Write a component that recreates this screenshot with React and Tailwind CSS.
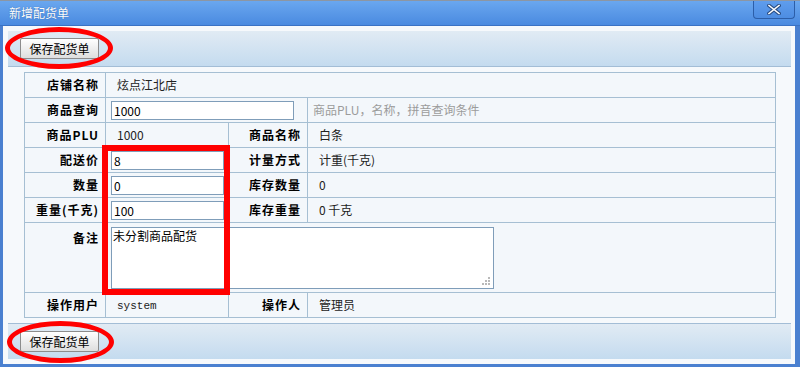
import React from "react";

const font = "font-['Noto_Sans_CJK_SC',sans-serif]";

const Label = ({ children, className = "" }) => (
  <td
    className={`border border-[#a6bfd3] pr-[6px] text-right align-middle text-[12px] font-bold tracking-[1px] text-black ${className}`}
  >
    {children}
  </td>
);

const Value = ({ children, colSpan, className = "", color = "text-[#222]" }) => (
  <td
    colSpan={colSpan}
    className={`border border-[#a6bfd3] pl-[5px] align-middle text-[12px] ${color} ${className}`}
  >
    {children}
  </td>
);

const Text = ({ children }) => <span className="ml-[6px]">{children}</span>;

const Input = ({ value, w }) => (
  <input
    readOnly
    value={value}
    className={`${w} block h-[19px] border border-[#7f9db9] bg-white px-[2px] text-[12px] text-black outline-none`}
  />
);

const SaveButton = () => (
  <button className="h-[21px] w-[79px] rounded-[2px] border border-[#8c8c8c] bg-gradient-to-b from-white to-[#dedede] text-[12px] text-black">
    保存配货单
  </button>
);

const Toolbar = ({ border }) => (
  <div
    className={`flex h-[36px] items-center bg-gradient-to-b from-[#e1ebf4] to-[#c4dbef] pl-[12px] ${border}`}
  >
    <SaveButton />
  </div>
);

export default function App() {
  return (
    <div className={`relative flex h-[367px] w-[800px] flex-col overflow-hidden ${font}`}>
      {/* title bar */}
      <div className="relative flex h-[26px] shrink-0 items-center border-t border-b border-t-[#8c96a3] border-b-[#3a72c4] bg-gradient-to-b from-[#6aa7ef] to-[#4a8ae0] pl-[9px]">
        <span className="text-[12px] text-white [text-shadow:0_0_1px_#2a5a9a]">新增配货单</span>
        <div className="absolute right-[5px] top-0 flex h-[18px] w-[42px] items-center justify-center rounded-b-[4px] border border-t-0 border-[#2c5ea8] bg-gradient-to-b from-[#5f9ded] to-[#4d8de2]">
          <svg width="14" height="11" viewBox="0 0 14 11">
            <path d="M2 1.5 L12 9.5 M12 1.5 L2 9.5" stroke="#2b4f86" strokeWidth="3.6" strokeLinecap="square" />
            <path d="M2 1.5 L12 9.5 M12 1.5 L2 9.5" stroke="#ffffff" strokeWidth="1.6" strokeLinecap="square" />
          </svg>
        </div>
      </div>

      {/* body */}
      <div className="flex flex-1 flex-col border-b-[3px] border-l-[3px] border-r-[5px] border-[#4a80d0] bg-[#f6f9fc] pl-[5px] pr-[4px] pt-[5px]">
        <Toolbar border="border-b border-[#a3bdd6]" />

        <table className="ml-[16px] mt-[5px] w-[752px] table-fixed border-collapse bg-[#f3f7fb]">
          <colgroup>
            <col className="w-[81px]" />
            <col className="w-[123px]" />
            <col className="w-[79px]" />
            <col />
          </colgroup>
          <tbody>
            <tr className="h-[25px]">
              <Label>店铺名称</Label>
              <Value colSpan={3}>
                <Text>炫点江北店</Text>
              </Value>
            </tr>
            <tr className="h-[25px]">
              <Label>商品查询</Label>
              <Value colSpan={2}>
                <Input value="1000" w="w-[183px]" />
              </Value>
              <Value color="text-[#9c9c9c]">商品PLU，名称，拼音查询条件</Value>
            </tr>
            <tr className="h-[25px]">
              <Label>商品PLU</Label>
              <Value>
                <Text>1000</Text>
              </Value>
              <Label>商品名称</Label>
              <Value>
                <Text>白条</Text>
              </Value>
            </tr>
            <tr className="h-[25px]">
              <Label>配送价</Label>
              <Value>
                <Input value="8" w="w-[113px]" />
              </Value>
              <Label>计量方式</Label>
              <Value>
                <Text>计重(千克)</Text>
              </Value>
            </tr>
            <tr className="h-[25px]">
              <Label>数量</Label>
              <Value>
                <Input value="0" w="w-[113px]" />
              </Value>
              <Label>库存数量</Label>
              <Value>
                <Text>0</Text>
              </Value>
            </tr>
            <tr className="h-[25px]">
              <Label>重量(千克)</Label>
              <Value>
                <Input value="100" w="w-[113px]" />
              </Value>
              <Label>库存重量</Label>
              <Value>
                <Text>0 千克</Text>
              </Value>
            </tr>
            <tr className="h-[70px]">
              <Label className="pt-[6px] align-top">备注</Label>
              <Value colSpan={3} className="align-top pt-[4px]">
                <div className="relative h-[62px] w-[383px]">
                  <textarea
                    readOnly
                    value="未分割商品配货"
                    className="block h-full w-full resize-none border border-[#7f9db9] bg-white px-[1px] py-0 text-[12px] leading-[16px] text-black outline-none"
                  />
                  <svg className="absolute bottom-[3px] right-[3px]" width="9" height="9" viewBox="0 0 9 9">
                    <rect x="6" y="0" width="2" height="2" fill="#b9b9b9" />
                    <rect x="3" y="3" width="2" height="2" fill="#b9b9b9" />
                    <rect x="6" y="3" width="2" height="2" fill="#b9b9b9" />
                    <rect x="0" y="6" width="2" height="2" fill="#b9b9b9" />
                    <rect x="3" y="6" width="2" height="2" fill="#b9b9b9" />
                    <rect x="6" y="6" width="2" height="2" fill="#b9b9b9" />
                  </svg>
                </div>
              </Value>
            </tr>
            <tr className="h-[25px]">
              <Label>操作用户</Label>
              <Value>
                <span className="ml-[6px] font-['Liberation_Mono',monospace] text-[11px]">system</span>
              </Value>
              <Label>操作人</Label>
              <Value>
                <Text>管理员</Text>
              </Value>
            </tr>
          </tbody>
        </table>

        <div className="mt-[5px]">
          <Toolbar border="border-t border-[#a3bdd6]" />
        </div>
      </div>

      {/* red annotations */}
      <div className="pointer-events-none absolute left-[5px] top-[27px] h-[42px] w-[108px] rounded-[50%] border-[5px] border-[#ff0000]" />
      <div className="pointer-events-none absolute left-[7px] top-[321px] h-[42px] w-[107px] rounded-[50%] border-[5px] border-[#ff0000]" />
      <div className="pointer-events-none absolute left-[102px] top-[145px] h-[150px] w-[128px] border-[6px] border-[#ff0000]" />
    </div>
  );
}
